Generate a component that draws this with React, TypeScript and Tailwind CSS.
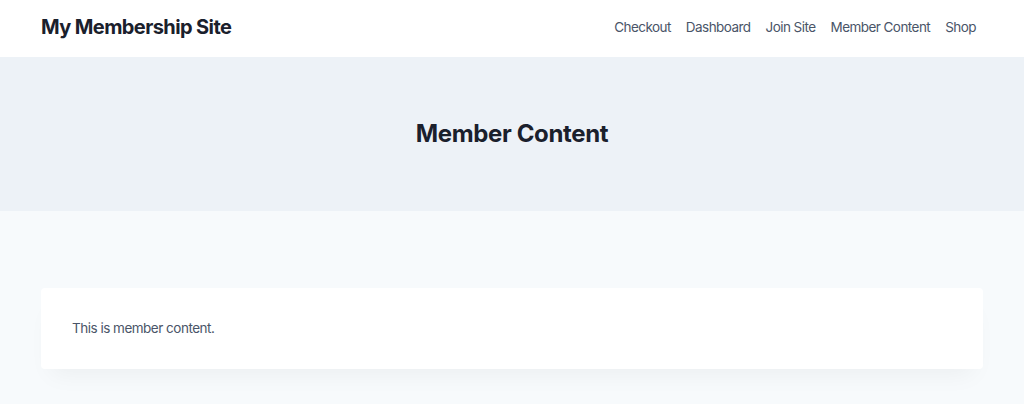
export default function App() {
  const links = ['Checkout', 'Dashboard', 'Join Site', 'Member Content', 'Shop']
  return (
    <div className="min-h-[404px] bg-[#f7fafc] font-['Inter',sans-serif]">
      <header className="flex h-[57px] items-center justify-between bg-white px-[41px]">
        <span className="pb-[3px] text-[20px] font-bold tracking-[-0.6px] text-[#1a202c]">My Membership Site</span>
        <nav className="flex items-center gap-[15px] pr-[7px] pb-[2px]">
          {links.map((l) => (
            <a key={l} className="text-[13.5px] tracking-[-0.55px] text-[#4a5568]">
              {l}
            </a>
          ))}
        </nav>
      </header>
      <section className="flex h-[154px] items-center justify-center bg-[#edf2f7]">
        <h1 className="text-[24px] font-bold tracking-[-0.35px] text-[#1a202c]">Member Content</h1>
      </section>
      <main className="px-[41px] pt-[77px] pb-[40px]">
        <article className="flex h-[81px] items-center rounded-[4px] bg-white px-[31px] shadow-[0_15px_25px_-10px_rgba(0,0,0,0.05)]">
          <p className="text-[13.5px] tracking-[-0.5px] text-[#4a5568]">This is member content.</p>
        </article>
      </main>
    </div>
  )
}
